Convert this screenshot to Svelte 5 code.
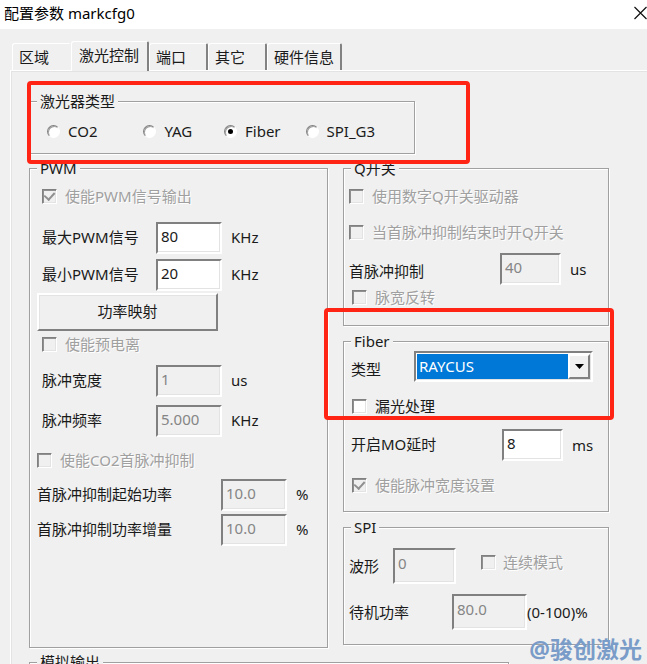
<script>
  const tabs = ['区域', '激光控制', '端口', '其它', '硬件信息'];
  const lasers = ['CO2', 'YAG', 'Fiber', 'SPI_G3'];
  let activeTab = $state('激光控制');
  let laser = $state('Fiber');
  let fiberType = $state('RAYCUS');
</script>

{#snippet check(id, text, checked, disabled)}
  <label class="check" class:off={disabled} for={id}>
    <input type="checkbox" {id} {checked} {disabled} />
    <span>{text}</span>
  </label>
{/snippet}

{#snippet field(id, text, value, unit, disabled)}
  <div class="field">
    <label for={id}>{text}</label>
    <input type="text" {id} {value} {disabled} />
    <span class="unit">{unit}</span>
  </div>
{/snippet}

<main class="dialog">
  <header>
    <h1>配置参数 markcfg0</h1>
    <button class="close" aria-label="关闭">
      <svg width="14" height="14" viewBox="0 0 14 14">
        <path d="M1.5 1L13.5 13M13.5 1L1.5 13" fill="none" stroke="#111" stroke-width="1.2" />
      </svg>
    </button>
  </header>

  <div class="tabs" role="tablist">
    {#each tabs as tab}
      <button
        role="tab"
        aria-selected={tab === activeTab}
        class:active={tab === activeTab}
        onclick={() => (activeTab = tab)}>{tab}</button>
    {/each}
  </div>

  <section class="page">
    <div class="marked laser">
      <fieldset>
        <legend>激光器类型</legend>
        <div class="radios">
          {#each lasers as name}
            <label>
              <input type="radio" name="laser" value={name} bind:group={laser} />
              <span>{name}</span>
            </label>
          {/each}
        </div>
      </fieldset>
      <div class="mark"></div>
    </div>

    <div class="columns">
      <fieldset class="pwm">
        <legend>PWM</legend>
        <div class="inset">
          {@render check('pwm-out', '使能PWM信号输出', true, true)}
          {@render field('pwm-max', '最大PWM信号', '80', 'KHz', false)}
          {@render field('pwm-min', '最小PWM信号', '20', 'KHz', false)}
        </div>
        <button class="map">功率映射</button>
        <div class="inset second">
          {@render check('pre-ion', '使能预电离', false, true)}
          {@render field('pulse-width', '脉冲宽度', '1', 'us', true)}
          {@render field('pulse-freq', '脉冲频率', '5.000', 'KHz', true)}
        </div>
        <div class="co2">
          {@render check('co2-first', '使能CO2首脉冲抑制', false, true)}
          {@render field('start-power', '首脉冲抑制起始功率', '10.0', '%', true)}
          {@render field('step-power', '首脉冲抑制功率增量', '10.0', '%', true)}
        </div>
      </fieldset>

      <div class="right">
        <fieldset class="qswitch">
          <legend>Q开关</legend>
          {@render check('q-digital', '使用数字Q开关驱动器', false, true)}
          {@render check('q-open', '当首脉冲抑制结束时开Q开关', false, true)}
          {@render field('q-first', '首脉冲抑制', '40', 'us', true)}
          <div class="invert">
            {@render check('q-invert', '脉宽反转', false, true)}
          </div>
        </fieldset>

        <div class="marked fiber">
          <fieldset>
            <legend>Fiber</legend>
            <div class="type">
              <label for="fiber-type">类型</label>
              <div class="combo">
                <select id="fiber-type" bind:value={fiberType}>
                  <option>RAYCUS</option>
                  <option>IPG</option>
                </select>
                <span class="arrow">
                  <svg width="9" height="5" viewBox="0 0 9 5"><path d="M0 0H9L4.5 5Z" fill="#000" /></svg>
                </span>
              </div>
            </div>
            {@render check('leak', '漏光处理', false, false)}
            {@render field('mo-delay', '开启MO延时', '8', 'ms', false)}
            {@render check('width-set', '使能脉冲宽度设置', true, true)}
          </fieldset>
          <div class="mark"></div>
        </div>

        <fieldset class="spi">
          <legend>SPI</legend>
          <div class="wave">
            {@render field('wave', '波形', '0', '', true)}
            {@render check('continuous', '连续模式', false, true)}
          </div>
          <div class="standby">
            {@render field('standby', '待机功率', '80.0', '(0-100)%', true)}
          </div>
        </fieldset>
      </div>
    </div>

    <fieldset class="analog">
      <legend>模拟输出</legend>
    </fieldset>
  </section>

  <div class="watermark">@骏创激光</div>
</main>

<style>
  :global(body) {
    margin: 0;
  }
  .dialog,
  .dialog * {
    box-sizing: border-box;
  }
  .dialog {
    position: relative;
    display: flex;
    flex-direction: column;
    height: 100vh;
    overflow: hidden;
    background: #f0f0f0;
    color: #1a1a1a;
    font: 15px/20px 'Noto Sans', 'Noto Sans CJK SC', sans-serif;
  }
  button,
  input,
  select {
    margin: 0;
    color: inherit;
    font: inherit;
    border-radius: 0;
  }
  header {
    display: flex;
    flex: none;
    align-items: center;
    justify-content: space-between;
    height: 29px;
    padding: 0 0 4px 4px;
    background: #fff;
    color: #000;
  }
  h1 {
    margin: 0;
    font-size: 15px;
    font-weight: 400;
  }
  .close {
    display: flex;
    padding: 0;
    border: 0;
    background: none;
  }

  .tabs {
    display: flex;
    flex: none;
    align-items: flex-end;
    height: 41px;
    padding-left: 12px;
  }
  .tabs button {
    min-width: 59px;
    height: 27px;
    padding: 0 6px;
    border: solid;
    border-width: 1px 2px 0 1px;
    border-color: #fff #828282 #fff #fff;
    border-radius: 3px 2px 0 0;
    background: #f0f0f0;
    text-align: left;
  }
  .tabs button:first-child {
    border-right-color: #f0f0f0;
  }
  .tabs .active {
    position: relative;
    height: 30px;
    margin-bottom: -1px;
    padding: 0 8px 3px 7px;
  }

  .page {
    flex: 1 0 auto;
    margin-left: 10px;
    padding: 20px 38px 0 18px;
    border: solid #fff;
    border-width: 1px 0 0 1px;
    box-shadow: inset 1px 1px 0 #e3e3e3;
  }

  fieldset {
    min-width: 0;
    margin: 0;
    padding: 0 5px;
    border: 1px solid #a0a0a0;
    box-shadow: 1px 1px 0 #fff, inset 1px 1px 0 #fff;
  }
  legend {
    height: 20px;
    margin-left: 2px;
    padding: 0 3px;
    background: #f0f0f0;
  }
  .marked {
    position: relative;
  }
  .mark {
    position: absolute;
    border: 4px solid #ff2414;
    border-radius: 4px;
    pointer-events: none;
  }
  .laser {
    width: 386px;
    max-width: 100%;
  }
  .laser .mark {
    inset: -10px -55px -10px -2px;
  }
  .pwm legend,
  .fiber legend {
    margin-left: 0;
  }
  .radios {
    display: grid;
    grid-template-columns: 97fr 81fr 82fr 104fr;
    height: 42px;
    padding: 0 0 2px 12px;
    align-items: center;
  }
  .radios label {
    display: flex;
    gap: 8px;
    align-items: center;
  }
  .radios input {
    display: grid;
    place-items: center;
    width: 13px;
    height: 13px;
    appearance: none;
    border: 1px solid;
    border-color: #808080 #fff #fff #808080;
    border-radius: 50%;
    background: #fff;
    box-shadow: inset 1px 1px 0 #a0a0a0;
  }
  .radios input:checked::before {
    width: 5px;
    height: 5px;
    border-radius: 50%;
    background: #000;
    content: '';
  }

  .columns {
    display: grid;
    grid-template-columns: minmax(0, 299fr) minmax(0, 266fr);
    gap: 15px;
    margin-top: 4px;
  }
  .right {
    display: flex;
    flex-direction: column;
    gap: 5px;
    padding-bottom: 3px;
  }

  .check {
    display: flex;
    gap: 8px;
    align-items: center;
    height: 26px;
  }
  .check input {
    display: grid;
    flex: none;
    place-items: center;
    width: 15px;
    height: 15px;
    appearance: none;
    border: 1px solid;
    border-color: #808080 #fff #fff #808080;
    background: #fff;
    box-shadow: inset 1px 1px 0 #909090, inset -1px -1px 0 #e3e3e3;
  }
  .check input:disabled {
    background: #f0f0f0;
  }
  .check input:checked::before {
    width: 5px;
    height: 8px;
    margin-bottom: 3px;
    border: solid #909090;
    border-width: 0 2px 2px 0;
    transform: rotate(42deg);
    content: '';
  }
  .off {
    color: #a0a0a0;
    text-shadow: 1px 1px 0 #fff;
  }

  .field {
    display: flex;
    align-items: center;
    height: 32px;
  }
  .field label {
    flex: none;
    width: 114px;
    padding-bottom: 2px;
    white-space: nowrap;
  }
  .field input {
    width: 66px;
    min-width: 0;
    height: 32px;
    padding: 0 3px 4px;
    border: 2px solid;
    border-color: #808080 #fff #fff #808080;
    outline: 0;
    background: #fff;
    box-shadow: inset -1px -1px 0 #e3e3e3;
  }
  .field input:disabled {
    background: #f0f0f0;
    color: #858585;
  }
  .unit {
    margin-left: 9px;
    padding-bottom: 2px;
    white-space: nowrap;
  }

  .pwm {
    padding: 0 7px;
  }
  .inset {
    display: flex;
    flex-direction: column;
    gap: 5px;
    padding: 5px 0 2px 5px;
  }
  .inset .check {
    margin-bottom: 8px;
  }
  .map {
    display: block;
    width: 181px;
    height: 38px;
    padding: 0 0 2px;
    border: 2px solid;
    border-color: #fff #808080 #808080 #fff;
    background: #f0f0f0;
    box-shadow: inset 1px 1px 0 #e3e3e3;
  }
  .second {
    gap: 8px;
    padding: 0 0 10px 5px;
  }
  .second .check {
    margin-bottom: 0;
  }
  .co2 {
    display: flex;
    flex-direction: column;
    gap: 3px;
  }
  .co2 .check {
    margin-bottom: 3px;
  }
  .co2 .field label {
    width: 184px;
  }

  .right .field label {
    width: 151px;
  }
  .right .field input {
    width: 61px;
  }
  .right .unit {
    padding: 0;
  }
  .qswitch {
    height: 168px;
  }
  .qswitch .check {
    height: 36px;
  }
  .qswitch > .field {
    margin-top: 3px;
  }
  .qswitch .field label {
    padding: 4px 0 0;
  }
  .invert {
    padding-left: 3px;
  }
  .invert .check {
    height: 24px;
  }

  .fiber fieldset {
    height: 181px;
    padding: 0 7px;
  }
  .fiber .mark {
    inset: -23px -5px 92px -19px;
  }
  .type {
    display: flex;
    align-items: center;
    padding-right: 8px;
  }
  .type label {
    width: 63px;
    padding-top: 4px;
  }
  .combo {
    display: flex;
    flex: 1;
    height: 31px;
    padding: 1px;
    border: 2px solid;
    border-color: #808080 #fff #fff #808080;
    background: #fff;
    box-shadow: inset -1px -1px 0 #e3e3e3;
  }
  .combo select {
    flex: 1;
    min-width: 0;
    padding: 0 2px 2px;
    appearance: none;
    border: 0;
    outline: 0;
    background: #0078d7;
    color: #fff;
  }
  .arrow {
    display: grid;
    place-items: center;
    width: 22px;
    border: 2px solid;
    border-color: #fff #808080 #808080 #fff;
    background: #f0f0f0;
    pointer-events: none;
  }
  .fiber .check {
    margin: 11px 0 10px 1px;
  }

  .spi {
    height: 128px;
  }
  .wave,
  .standby {
    display: flex;
    align-items: center;
  }
  .wave {
    gap: 16px;
    margin: 11px 0 10px;
  }
  .spi .field {
    height: 36px;
  }
  .spi .field label {
    padding: 0;
  }
  .spi .field input {
    height: 36px;
    padding-bottom: 6px;
  }
  .wave .field label {
    width: 44px;
  }
  .wave .field input {
    width: 63px;
  }
  .wave .check {
    gap: 7px;
    padding-bottom: 8px;
  }
  .standby .field label {
    width: 103px;
  }
  .standby .field input {
    width: 75px;
  }
  .standby .unit {
    margin-left: 0;
  }
  .analog {
    width: 480px;
    max-width: 100%;
    height: 60px;
    margin-top: 4px;
  }
  .watermark {
    position: absolute;
    right: 5px;
    bottom: 0;
    color: #7a9cc8;
    font-size: 23px;
    font-weight: 700;
    line-height: 30px;
  }
</style>
